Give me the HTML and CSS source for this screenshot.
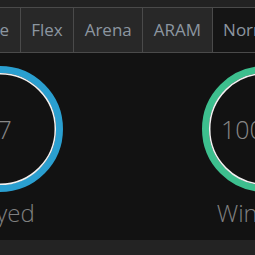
FILE: index.html
```html
<!DOCTYPE html>
<html lang="en">
<head>
    <meta charset="UTF-8">
    <meta name="viewport" content="width=device-width, initial-scale=1.0">
    <title>Match Stats</title>
    <link rel="stylesheet" href="styles.css">
</head>
<body>
    <!-- Queue tabs -->
    <div class="header">
        <div class="tabs">
            <div class="tab">Solo Queue</div>
            <div class="tab">Flex</div>
            <div class="tab">Arena</div>
            <div class="tab">ARAM</div>
            <div class="tab active">Normal</div>
        </div>
    </div>

    <!-- Stat rings -->
    <div class="stats">
        <div class="stat">
            <div class="ring">
                <svg viewBox="0 0 126 126" width="126" height="126">
                    <circle cx="63" cy="63" r="59.5" class="arc blue"></circle>
                    <circle cx="63" cy="63" r="55.3" class="inner"></circle>
                </svg>
                <span class="value">17</span>
            </div>
            <div class="label">Played</div>
        </div>
        <div class="stat">
            <div class="ring">
                <svg viewBox="0 0 126 126" width="126" height="126">
                    <circle cx="63" cy="63" r="59.5" class="arc green"></circle>
                    <circle cx="63" cy="63" r="55.3" class="inner"></circle>
                </svg>
                <span class="value">100.0%</span>
            </div>
            <div class="label">Win Rate</div>
        </div>
    </div>

    <div class="footer"></div>
</body>
</html>
```

FILE: styles.css
```css
/* Global styles */
body {
    font-family: "Open Sans", "Liberation Sans", sans-serif;
    background-color: #121212;
    margin: 0;
    overflow: hidden;
    width: 255px;
    height: 255px;
}

/* Tabs */
.header {
    background-color: #222;
    padding-top: 7px;
}

.tabs {
    display: flex;
    margin-left: -94px;
    border-top: 1px solid #4a4a4a;
    border-bottom: 1px solid #4a4a4a;
}

.tab {
    flex: none;
    height: 44px;
    line-height: 44px;
    padding: 0 10.5px;
    font-size: 17px;
    color: #8c96a0;
    background-color: #282828;
    border-left: 1px solid #4a4a4a;
    white-space: nowrap;
}

.tab.active {
    background-color: #151515;
}

/* Stats */
.stats {
    display: flex;
    margin-top: 13px;
    margin-left: -133px;
}

.stat {
    flex: none;
    width: 265px;
    display: flex;
    flex-direction: column;
    align-items: center;
}

.ring {
    display: grid;
    place-items: center;
    width: 126px;
    height: 126px;
}

.ring svg,
.ring .value {
    grid-area: 1 / 1;
}

.arc {
    fill: none;
    stroke-width: 7;
}

.arc.blue {
    stroke: #2a9fd0;
}

.arc.green {
    stroke: #3dbf8e;
}

.inner {
    fill: none;
    stroke: #f2f2f2;
    stroke-width: 1.5;
}

.value {
    font-size: 25px;
    font-weight: 300;
    color: #888;
    white-space: nowrap;
    margin-right: 4px;
}

.label {
    margin-top: 5px;
    font-size: 24px;
    line-height: 32px;
    font-weight: 300;
    color: #808080;
    white-space: nowrap;
}

/* Footer */
.footer {
    margin-top: 11px;
    height: 20px;
    background-color: #232323;
}
```
